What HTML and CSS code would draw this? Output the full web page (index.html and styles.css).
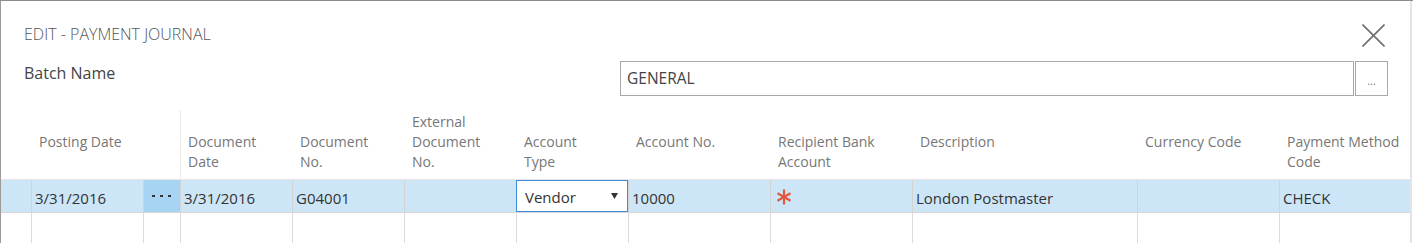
FILE: index.html
```html
<!DOCTYPE html>
<html>
<head>
<meta charset="utf-8">
<link rel="stylesheet" href="styles.css">
</head>
<body>
<div class="dialog">
  <div class="inner">
    <div class="top">
      <div class="title-row">
        <div class="title">EDIT - PAYMENT JOURNAL</div>
        <svg class="close" width="23" height="23" viewBox="0 0 23 23"><path d="M0.5 0.5 L22.5 22.5 M22.5 0.5 L0.5 22.5" stroke="#6e6e6e" stroke-width="1.6" fill="none"/></svg>
      </div>
      <div class="batch-row">
        <div class="label">Batch Name</div>
        <div class="input">GENERAL</div>
        <div class="btn">...</div>
      </div>
    </div>
    <div class="grid">
      <div class="row head">
        <div class="hc"></div>
        <div class="hc"><div class="ht">Posting Date</div></div>
        <div class="hc"></div>
        <div class="hc split"><div class="ht">Document<br>Date</div></div>
        <div class="hc"><div class="ht">Document<br>No.</div></div>
        <div class="hc"><div class="ht">External<br>Document<br>No.</div></div>
        <div class="hc"><div class="ht">Account<br>Type</div></div>
        <div class="hc"><div class="ht">Account No.</div></div>
        <div class="hc"><div class="ht">Recipient Bank<br>Account</div></div>
        <div class="hc"><div class="ht">Description</div></div>
        <div class="hc"><div class="ht">Currency Code</div></div>
        <div class="hc"><div class="ht">Payment Method<br>Code</div></div>
      </div>
      <div class="row data">
        <div class="c first"></div>
        <div class="c">3/31/2016</div>
        <div class="c more"><span class="dot"></span><span class="dot"></span><span class="dot"></span></div>
        <div class="c">3/31/2016</div>
        <div class="c">G04001</div>
        <div class="c"></div>
        <div class="c sel"><span>Vendor</span><svg width="7" height="6" viewBox="0 0 7 6"><path d="M0 0 H7 L3.5 6 Z" fill="#333"/></svg></div>
        <div class="c">10000</div>
        <div class="c req"><svg width="16" height="16" viewBox="0 0 16 16"><g stroke="#e2583e" stroke-width="2.2" stroke-linecap="butt"><path d="M8 0.5 V15.5"/><path d="M1.5 4.25 L14.5 11.75"/><path d="M14.5 4.25 L1.5 11.75"/></g></svg></div>
        <div class="c">London Postmaster</div>
        <div class="c"></div>
        <div class="c">CHECK</div>
      </div>
      <div class="row empty">
        <div class="c first"></div>
        <div class="c"></div>
        <div class="c"></div>
        <div class="c"></div>
        <div class="c"></div>
        <div class="c"></div>
        <div class="c"></div>
        <div class="c"></div>
        <div class="c"></div>
        <div class="c"></div>
        <div class="c"></div>
        <div class="c"></div>
      </div>
    </div>
  </div>
</div>
</body>
</html>
```
FILE: styles.css
```css
html, body {
  margin: 0;
  padding: 0;
  background: #fff;
}
body {
  font-family: "Open Sans", "Noto Sans", sans-serif;
  color: #333;
  overflow: hidden;
}
.dialog {
  height: 242px;
  border-top: 1px solid #8c8c8c;
  border-left: 1px solid #9a9a9a;
  overflow: hidden;
}
.inner {
  width: 1409px;
  height: 242px;
  border-right: 2px solid #e4e4e4;
  overflow: hidden;
}
.top {
  padding: 23px 25px 0 23px;
}
.title-row {
  display: flex;
  justify-content: space-between;
  align-items: flex-start;
  height: 23px;
}
.title {
  font-size: 16px;
  line-height: 20px;
  font-weight: 300;
  color: #555;
}
.close {
  display: block;
  flex: 0 0 auto;
}
.batch-row {
  display: flex;
  align-items: flex-start;
  margin-top: 14px;
  height: 35px;
}
.label {
  flex: 0 0 596px;
  margin-top: 2px;
  font-size: 16px;
  line-height: 20px;
  color: #444;
}
.input {
  box-sizing: border-box;
  flex: 0 0 734px;
  height: 35px;
  border: 1px solid #a8a8a8;
  padding-left: 6px;
  font-size: 15.5px;
  line-height: 33px;
  color: #444;
}
.btn {
  box-sizing: border-box;
  flex: 0 0 33px;
  height: 35px;
  margin-left: 1px;
  border: 1px solid #aaa;
  font-size: 11px;
  line-height: 12px;
  color: #777;
  display: flex;
  justify-content: center;
  align-items: flex-end;
  padding-bottom: 8px;
}
.grid {
  margin-top: 14px;
}
.row {
  display: grid;
  grid-template-columns: 30px 112px 37px 112px 112px 112px 112px 142px 142px 225px 142px 131px;
}
.head {
  height: 69px;
  border-bottom: 1px solid #e6e6e6;
}
.hc {
  border-left: 1px solid transparent;
  padding: 0 4px 7px 7px;
  display: flex;
  flex-direction: column;
  justify-content: flex-end;
  overflow: hidden;
}
.hc.split {
  border-left-color: #ebebeb;
}
.ht {
  min-height: 40px;
  font-size: 14px;
  line-height: 20px;
  color: #777;
  white-space: nowrap;
}
.data {
  height: 32px;
  background: #cde6f7;
  border-bottom: 1px solid #d6d6d6;
}
.c {
  border-left: 1px solid #d3d3d3;
  padding: 4px 3px 0 3px;
  font-size: 15px;
  line-height: 28px;
  color: #333;
  white-space: nowrap;
  overflow: hidden;
}
.c.first {
  border-left: none;
}
.data .c.more {
  background: #a8d4f3;
  padding: 0 0 0 8px;
  display: flex;
  align-items: center;
  gap: 5.5px;
}
.dot {
  width: 2.5px;
  height: 2.5px;
  background: #333;
  display: block;
}
.data .c.sel {
  border: 1px solid #3e8ddd;
  background: #fff;
  padding: 3px 9px 0 8px;
  line-height: 27px;
  display: flex;
  justify-content: space-between;
  align-items: center;
}
.sel span {
  line-height: 27px;
}
.sel svg {
  display: block;
  margin-top: -3px;
}
.c.req {
  padding: 0 0 0 5px;
  display: flex;
  align-items: center;
}
.c.req svg {
  display: block;
  margin-top: 2px;
}
.empty {
  height: 40px;
}
.empty .c {
  border-left-color: #dcdcdc;
}
```
